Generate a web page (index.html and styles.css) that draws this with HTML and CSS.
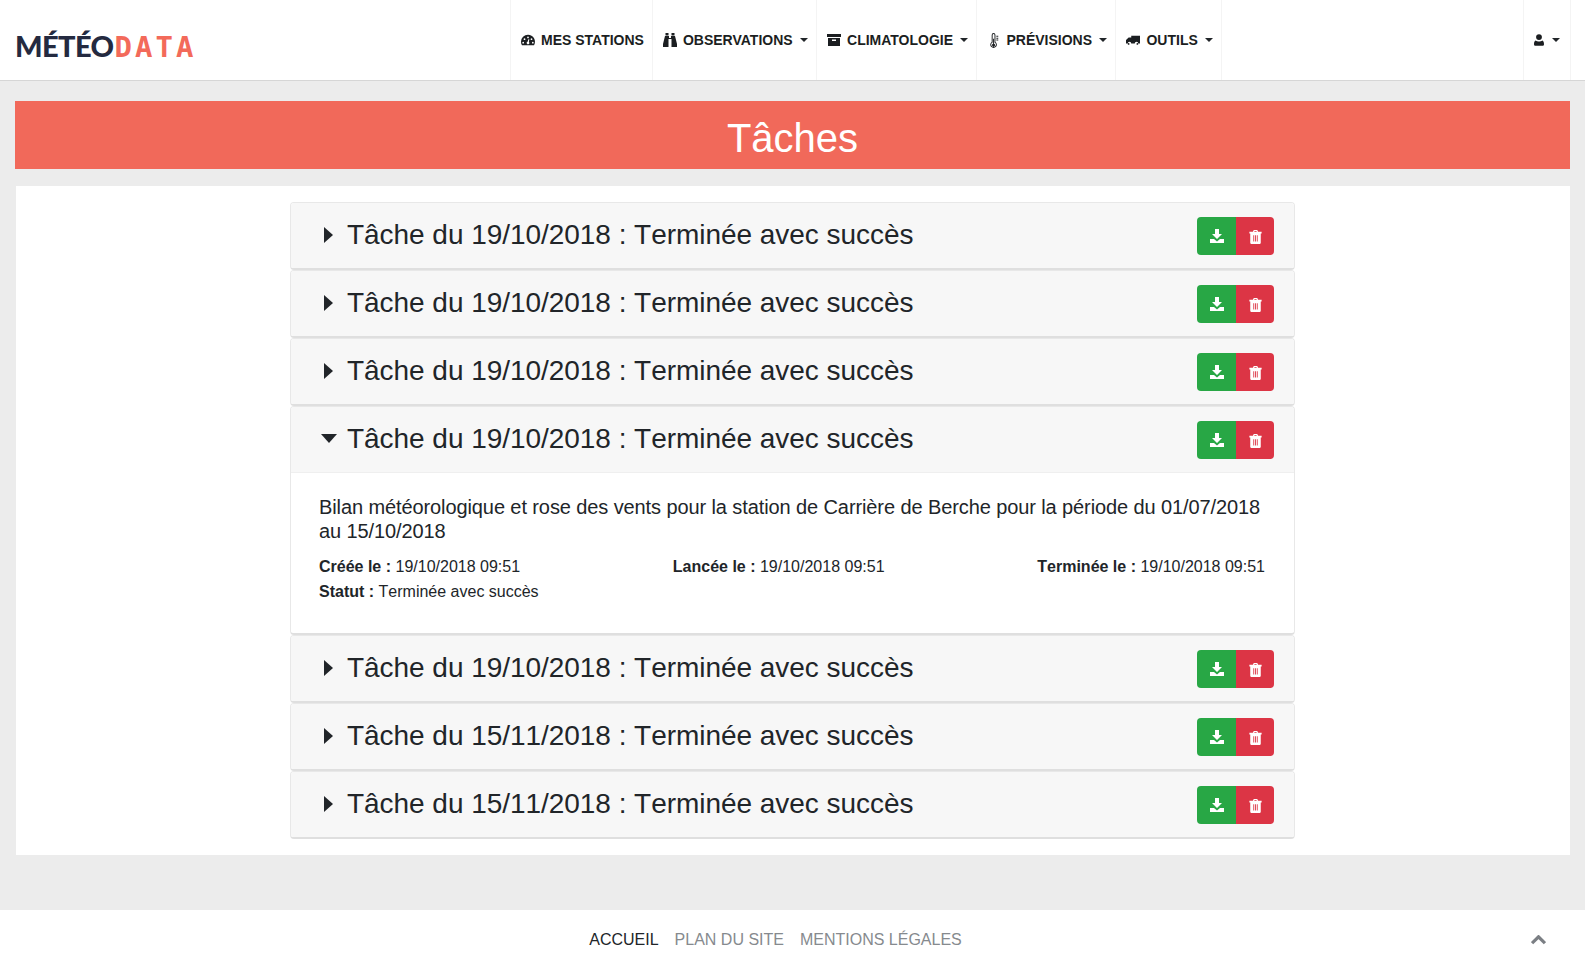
FILE: index.html
```html
<!DOCTYPE html>
<html lang="fr">
<head>
<meta charset="utf-8">
<title>Tâches</title>
<link rel="stylesheet" href="styles.css">
</head>
<body>
<svg class="defs" width="0" height="0" aria-hidden="true">
  <symbol id="i-dl" viewBox="0 0 16 16"><path d="M6 1h4v5h3l-5 5-5-5h3zM1 11h4l3 2.500 3-2.500h4v4H1z"/></symbol>
  <symbol id="i-trash" viewBox="0 0 14 16"><path fill-rule="evenodd" d="M5 0h4l1 2h4v2h-1v11l-1 1H2l-1-1V4H0V2h4zM6 1 5.500 2h3L8 1zM4.500 6v7h1V6zM6.500 6v7h1V6zM8.500 6v7h1V6z"/></symbol>
</svg>

<nav class="navbar">
  <a class="logo" href="#"><span class="logo-a">MÉTÉO</span><span class="logo-b">DATA</span></a>
  <ul class="menu">
    <li class="menu-item"><svg class="nav-ico" viewBox="0 0 16 14"><path fill-rule="evenodd" d="M8 1a8 8 0 0 0-8 8c0 1.500.4 2.900 1.100 4h13.800A8 8 0 0 0 8 1zM8 3a1 1 0 1 1 0 2 1 1 0 0 1 0-2zM4 5a1 1 0 1 1 0 2 1 1 0 0 1 0-2zM12 5a1 1 0 1 1 0 2 1 1 0 0 1 0-2zM2.500 9a1 1 0 1 1 0 2 1 1 0 0 1 0-2zM13.500 9a1 1 0 1 1 0 2 1 1 0 0 1 0-2zM9.500 6 9 9.300a1.500 1.500 0 1 1-1.500-.3L8.500 6z"/></svg>MES STATIONS</li>
    <li class="menu-item"><svg class="nav-ico" viewBox="0 0 14 14"><path d="M2.500 0h3v2.500h-3zM8.500 0h3v2.500h-3zM2 3h4v2h2V3h4l2 8v3H8.500V6h-3v8H0v-3z"/></svg>OBSERVATIONS<span class="caret"></span></li>
    <li class="menu-item"><svg class="nav-ico" viewBox="0 0 14 14"><path fill-rule="evenodd" d="M0 1h14v3H0zM1 5h12v8H1zM5 6.500v1.500h4V6.500z"/></svg>CLIMATOLOGIE<span class="caret"></span></li>
    <li class="menu-item"><svg class="nav-ico nav-thin" viewBox="0 0 9 16"><path fill-rule="evenodd" d="M3.500 0a2 2 0 0 1 2 2v7.500a3.500 3.500 0 1 1-4 0V2a2 2 0 0 1 2-2zM3.500 1a1 1 0 0 0-1 1v8a2.500 2.500 0 1 0 2 0V2a1 1 0 0 0-1-1zM3 6h1v5.500a1.500 1.500 0 1 1-1 0zM6.500 3h2v1h-2zM6.500 5h2v1h-2zM6.500 7h2v1h-2z"/></svg>PRÉVISIONS<span class="caret"></span></li>
    <li class="menu-item menu-last"><svg class="nav-ico" viewBox="0 0 16 14"><path d="M6 2h10v9h-2a2 2 0 0 0-4 0H6a2 2 0 0 0-4 0H0V7l3-3h3zM4 11.500a1 1 0 1 1-2 0 1 1 0 0 1 2 0zM14 11.500a1 1 0 1 1-2 0 1 1 0 0 1 2 0z"/></svg>OUTILS<span class="caret"></span></li>
  </ul>
  <div class="user"><svg class="nav-ico user-ico" viewBox="0 0 12 14"><path d="M6 0a3.500 3.500 0 1 1 0 7 3.500 3.500 0 0 1 0-7zM2 7.500c1 1 2.500 1.300 4 1.300s3-.3 4-1.300c1.300.5 2 2 2 4.500 0 1.200-.8 2-2 2H2c-1.200 0-2-.8-2-2 0-2.500.7-4 2-4.500z"/></svg><span class="caret"></span></div>
</nav>

<main>
  <h1 class="banner">Tâches</h1>
  <section class="panel">
    <div class="tasks">
      <article class="task">
        <header class="task-head"><h4 class="task-title"><span class="arrow-right"></span>Tâche du 19/10/2018 : Terminée avec succès</h4>
          <div class="btns"><button class="btn btn-green"><svg class="btn-ico"><use href="#i-dl"/></svg></button><button class="btn btn-red"><svg class="btn-ico btn-ico-t"><use href="#i-trash"/></svg></button></div></header>
      </article>
      <article class="task">
        <header class="task-head"><h4 class="task-title"><span class="arrow-right"></span>Tâche du 19/10/2018 : Terminée avec succès</h4>
          <div class="btns"><button class="btn btn-green"><svg class="btn-ico"><use href="#i-dl"/></svg></button><button class="btn btn-red"><svg class="btn-ico btn-ico-t"><use href="#i-trash"/></svg></button></div></header>
      </article>
      <article class="task">
        <header class="task-head"><h4 class="task-title"><span class="arrow-right"></span>Tâche du 19/10/2018 : Terminée avec succès</h4>
          <div class="btns"><button class="btn btn-green"><svg class="btn-ico"><use href="#i-dl"/></svg></button><button class="btn btn-red"><svg class="btn-ico btn-ico-t"><use href="#i-trash"/></svg></button></div></header>
      </article>
      <article class="task task-open">
        <header class="task-head head-open"><h4 class="task-title"><span class="arrow-down"></span>Tâche du 19/10/2018 : Terminée avec succès</h4>
          <div class="btns"><button class="btn btn-green"><svg class="btn-ico"><use href="#i-dl"/></svg></button><button class="btn btn-red"><svg class="btn-ico btn-ico-t"><use href="#i-trash"/></svg></button></div></header>
        <div class="task-body">
          <p class="desc">Bilan météorologique et rose des vents pour la station de Carrière de Berche pour la période du 01/07/2018 au 15/10/2018</p>
          <div class="meta-row"><span><b>Créée le :</b> 19/10/2018 09:51</span><span><b>Lancée le :</b> 19/10/2018 09:51</span><span><b>Terminée le :</b> 19/10/2018 09:51</span></div>
          <div class="meta-row"><span><b>Statut :</b> Terminée avec succès</span></div>
        </div>
      </article>
      <article class="task">
        <header class="task-head"><h4 class="task-title"><span class="arrow-right"></span>Tâche du 19/10/2018 : Terminée avec succès</h4>
          <div class="btns"><button class="btn btn-green"><svg class="btn-ico"><use href="#i-dl"/></svg></button><button class="btn btn-red"><svg class="btn-ico btn-ico-t"><use href="#i-trash"/></svg></button></div></header>
      </article>
      <article class="task">
        <header class="task-head"><h4 class="task-title"><span class="arrow-right"></span>Tâche du 15/11/2018 : Terminée avec succès</h4>
          <div class="btns"><button class="btn btn-green"><svg class="btn-ico"><use href="#i-dl"/></svg></button><button class="btn btn-red"><svg class="btn-ico btn-ico-t"><use href="#i-trash"/></svg></button></div></header>
      </article>
      <article class="task">
        <header class="task-head"><h4 class="task-title"><span class="arrow-right"></span>Tâche du 15/11/2018 : Terminée avec succès</h4>
          <div class="btns"><button class="btn btn-green"><svg class="btn-ico"><use href="#i-dl"/></svg></button><button class="btn btn-red"><svg class="btn-ico btn-ico-t"><use href="#i-trash"/></svg></button></div></header>
      </article>
    </div>
  </section>
</main>

<footer class="footer">
  <a class="foot-link foot-active" href="#">ACCUEIL</a>
  <a class="foot-link" href="#">PLAN DU SITE</a>
  <a class="foot-link" href="#">MENTIONS LÉGALES</a>
  <svg class="to-top" viewBox="0 0 14 9"><path d="M1 7.500 7 1.500l6 6" fill="none" stroke="#7b7f84" stroke-width="3"/></svg>
</footer>
</body>
</html>
```

FILE: styles.css
```css
* { box-sizing: border-box; }
html, body { margin: 0; padding: 0; }
body { background: #ececec; color: #212529; font-family: "Liberation Sans", Arial, sans-serif; font-kerning: none; height: 967px; overflow: hidden; }
.defs { position: absolute; }

.navbar { position: relative; height: 81px; background: #fff; border-bottom: 1px solid #d6d6d6; display: flex; padding-left: 15px; }
.logo { width: 180px; margin-right: 315px; padding-top: 29px; display: flex; align-items: baseline; align-self: flex-start; text-decoration: none; line-height: 34px; }
.logo-a { font-family: Lato, sans-serif; font-weight: 900; font-size: 29px; color: #242a40; letter-spacing: -0.6px; font-kerning: normal; }
.logo-b { margin-left: 1px; font-family: "DejaVu Sans Mono", monospace; font-weight: 700; font-size: 29px; color: #f36a5a; letter-spacing: 3px; }

.menu { list-style: none; margin: 0; padding: 0; display: flex; height: 80px; }
.menu-item { display: flex; align-items: center; height: 80px; padding: 0 8px 0 10px; border-left: 1px solid #f4f4f4; font-size: 14px; font-weight: 700; color: #1b1e21; white-space: nowrap; font-kerning: normal; }
.menu-last { border-right: 1px solid #f4f4f4; }
.nav-ico { width: 14px; height: 14px; fill: #1b1e21; margin-right: 6px; flex: none; }
.nav-thin { width: 9px; height: 15px; margin: 0 7px 0 3px; }
.caret { display: inline-block; margin-left: 7.4px; border-top: 4px solid #212529; border-left: 4px solid transparent; border-right: 4px solid transparent; }
.user { position: absolute; right: 14px; top: 0; height: 80px; width: 48px; display: flex; align-items: center; justify-content: center; border-left: 1px solid #f4f4f4; border-right: 1px solid #f4f4f4; }
.user-ico { width: 10px; height: 12px; margin: 0; }

.banner { margin: 20px 15px 17px; height: 68px; background: #f1695a; color: #fff; font-size: 40px; font-weight: 400; line-height: 74px; text-align: center; }
.panel { margin: 0 15px 0 16px; height: 669px; background: #fff; padding-top: 16px; }
.tasks { width: 1005px; margin-left: 274px; }
.task { background: #fff; border: 1px solid #e8e8e8; border-bottom: 2px solid #dfdfdf; border-radius: 4px; overflow: hidden; }
.task-head { height: 65px; background: #f7f7f7; display: flex; align-items: center; justify-content: space-between; padding: 0 20px 0 29px; }
.head-open { border-bottom: 1px solid #efefef; height: 66px; }
.task-title { display: flex; align-items: center; margin: 0 0 2px; font-size: 28px; font-weight: 400; line-height: 34px; color: #212529; letter-spacing: -0.04px; }
.arrow-right { width: 0; height: 0; margin: 0 14px 0 4px; border-left: 9px solid #212529; border-top: 8px solid transparent; border-bottom: 8px solid transparent; }
.arrow-down { width: 0; height: 0; margin: 0 10px 0 1px; border-top: 9px solid #212529; border-left: 8px solid transparent; border-right: 8px solid transparent; }
.btns { display: flex; }
.btn { width: 39px; height: 38px; border: 0; padding: 0; display: flex; align-items: center; justify-content: center; }
.btn-green { background: #28a745; border-radius: 4px 0 0 4px; }
.btn-red { background: #dc3545; border-radius: 0 4px 4px 0; width: 38px; }
.btn-ico { width: 16px; height: 16px; fill: #fff; }
.btn-ico-t { width: 13px; height: 14px; margin-top: 2px; }

.task-body { padding: 22px 29px 0 28px; height: 160px; }
.desc { margin: 0 0 11px; font-size: 20px; line-height: 24px; letter-spacing: -0.1px; font-kerning: normal; }
.meta-row { display: flex; justify-content: space-between; font-size: 16px; line-height: 25px; }

.footer { position: relative; margin-top: 55px; height: 57px; background: #fff; display: flex; justify-content: center; align-items: center; font-size: 16px; padding: 2px 34px 0 0; gap: 16px; }
.foot-link { color: #868a8e; text-decoration: none; }
.foot-active { color: #212529; }
.to-top { position: absolute; right: 39px; top: 25px; width: 15px; height: 10px; }
```
